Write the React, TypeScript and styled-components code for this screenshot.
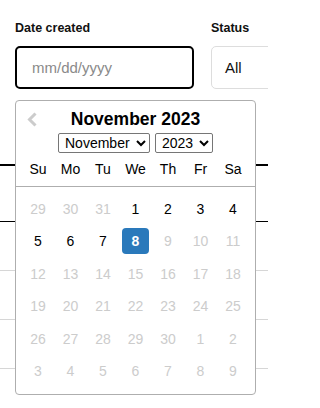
import React from "react";
import styled, { createGlobalStyle } from "styled-components";

const GlobalStyle = createGlobalStyle`
  html, body {
    margin: 0;
    padding: 0;
    background: #fff;
    overflow: hidden;
  }
  body {
    font-family: "Liberation Sans", Arial, sans-serif;
  }
`;

const WEEKDAYS = ["Su", "Mo", "Tu", "We", "Th", "Fr", "Sa"];

type Day = { label: number; muted: boolean; selected?: boolean };

// November 2023, today is the 8th, later days are disabled
const buildDays = (): Day[] => {
  const days: Day[] = [];
  [29, 30, 31].forEach((d) => days.push({ label: d, muted: true }));
  for (let d = 1; d <= 30; d++) {
    days.push({ label: d, muted: d > 8, selected: d === 8 });
  }
  for (let d = 1; d <= 9; d++) days.push({ label: d, muted: true });
  return days;
};

const App = () => {
  const days = buildDays();

  return (
    <>
      <GlobalStyle />
      <Page>
        <Filters>
          <Field $width={179}>
            <Label>Date created</Label>
            <DateInput placeholder="mm/dd/yyyy" readOnly autoFocus />
          </Field>
          <Field $width={120}>
            <Label>Status</Label>
            <StatusBox>All</StatusBox>
          </Field>
        </Filters>

        <Table>
          <HeadRow />
          <BodyRow $strong />
          <BodyRow />
          <BodyRow />
          <BodyRow />
        </Table>

        <Popup>
          <Header>
            <PrevButton aria-label="Previous month">
              <svg width="11" height="15" viewBox="0 0 11 15">
                <polyline
                  points="8.5,1.5 2.5,7.5 8.5,13.5"
                  fill="none"
                  stroke="#ccc"
                  strokeWidth="3"
                />
              </svg>
            </PrevButton>
            <CurrentMonth>November 2023</CurrentMonth>
            <Dropdowns>
              <MonthSelect defaultValue="November" $width={92}>
                <option>November</option>
              </MonthSelect>
              <MonthSelect defaultValue="2023" $width={58}>
                <option>2023</option>
              </MonthSelect>
            </Dropdowns>
            <WeekRow>
              {WEEKDAYS.map((w) => (
                <DayName key={w}>{w}</DayName>
              ))}
            </WeekRow>
          </Header>
          <Month>
            {days.map((d, i) => (
              <DayCell key={i} $muted={d.muted} $selected={d.selected}>
                {d.label}
              </DayCell>
            ))}
          </Month>
        </Popup>
      </Page>
    </>
  );
};

const Page = styled.div`
  position: relative;
  width: 268px;
  height: 408px;
  overflow: hidden;
`;

const Filters = styled.div`
  display: flex;
  gap: 17px;
  padding: 21px 0 0 15px;
`;

const Field = styled.div<{ $width: number }>`
  display: flex;
  flex-direction: column;
  flex: 0 0 ${(p) => p.$width}px;
`;

const Label = styled.div`
  font-size: 12.5px;
  line-height: 15px;
  font-weight: 700;
  color: #111;
  margin-bottom: 10px;
`;

const DateInput = styled.input`
  box-sizing: border-box;
  width: 100%;
  height: 43px;
  border: 2px solid #000;
  border-radius: 5px;
  padding: 0 0 0 15px;
  font-family: "Liberation Sans", Arial, sans-serif;
  font-size: 15px;
  color: #000;
  outline: none;

  &::placeholder {
    color: #8a8a8a;
  }
`;

const StatusBox = styled.div`
  box-sizing: border-box;
  height: 43px;
  border: 1px solid #ddd;
  border-radius: 5px;
  padding-left: 13px;
  display: flex;
  align-items: center;
  font-size: 15px;
  color: #111;
`;

const Table = styled.div`
  margin-top: 26px;
`;

const HeadRow = styled.div`
  height: 49px;
  border-bottom: 2px solid #000;
`;

const BodyRow = styled.div<{ $strong?: boolean }>`
  height: ${(p) => (p.$strong ? 55 : 48)}px;
  border-bottom: 1px solid ${(p) => (p.$strong ? "#000" : "#d6d6d6")};
`;

const Popup = styled.div`
  position: absolute;
  top: 100px;
  left: 15px;
  width: 241px;
  box-sizing: border-box;
  background: #fff;
  border: 1px solid #aeaeae;
  border-radius: 4px;
  font-family: "Liberation Sans", Arial, sans-serif;
`;

const Header = styled.div`
  position: relative;
  text-align: center;
  padding-top: 7px;
  border-bottom: 1px solid #aeaeae;
`;

const PrevButton = styled.button`
  position: absolute;
  top: 11px;
  left: 11px;
  padding: 0;
  border: none;
  background: none;
  line-height: 0;
`;

const CurrentMonth = styled.div`
  font-size: 17.5px;
  line-height: 22px;
  font-weight: 700;
  color: #000;
`;

const Dropdowns = styled.div`
  display: flex;
  justify-content: center;
  gap: 5px;
  margin-top: 3px;
`;

const MonthSelect = styled.select<{ $width: number }>`
  width: ${(p) => p.$width}px;
  height: 20px;
  font-family: "Liberation Sans", Arial, sans-serif;
  font-size: 14px;
  color: #000;
  background: #fff;
  border: 1px solid #767676;
  border-radius: 2px;
  padding: 0 0 0 2px;
`;

const WeekRow = styled.div`
  display: flex;
  justify-content: center;
`;

const DayName = styled.div`
  width: 27.2px;
  line-height: 27.2px;
  margin: 2.66px;
  font-size: 14px;
  color: #000;
`;

const Month = styled.div`
  display: grid;
  grid-template-columns: repeat(7, 32.5px);
  justify-content: center;
  padding: 6.4px 0;
`;

const DayCell = styled.div<{ $muted: boolean; $selected?: boolean }>`
  width: 27.2px;
  height: 26px;
  line-height: 26px;
  margin: 3.2px 2.66px;
  text-align: center;
  font-size: 14px;
  border-radius: 4px;
  color: ${(p) => (p.$selected ? "#fff" : p.$muted ? "#ccc" : "#000")};
  background: ${(p) => (p.$selected ? "#2a79bb" : "transparent")};
  font-weight: ${(p) => (p.$selected ? 700 : 400)};
`;

export default App;
